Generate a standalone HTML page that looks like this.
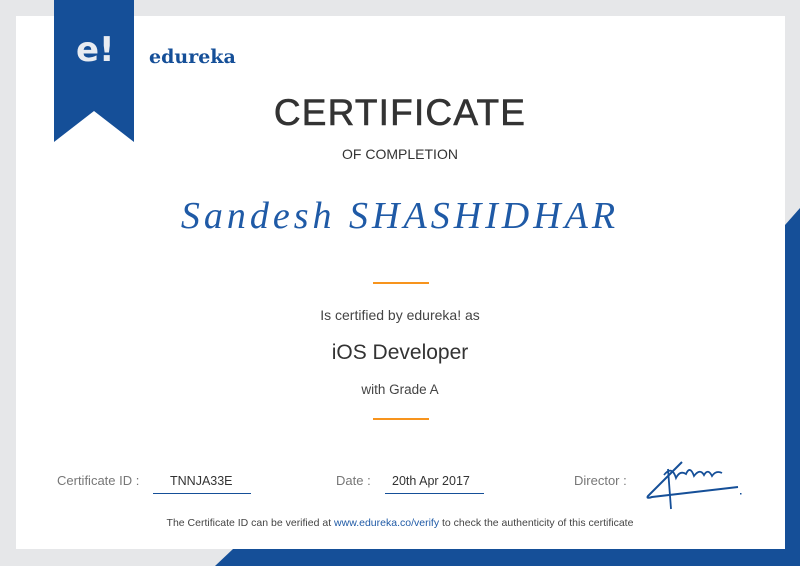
<!DOCTYPE html>
<html><head><meta charset="utf-8"><style>
*{margin:0;padding:0}
body{width:800px;height:566px;background:#e6e7e9;position:relative;overflow:hidden;font-family:"Liberation Sans",sans-serif}
.card{position:absolute;left:16px;top:16px;width:769px;height:533px;background:#fff}
.t{position:absolute;left:0;width:800px;text-align:center;white-space:nowrap}
.l{position:absolute;white-space:nowrap;font-size:13px;color:#777}
</style></head><body>
<div class="card"></div>
<svg style="position:absolute;left:0;top:0" width="800" height="566">
<polygon points="54,0 134,0 134,142 94,111 54,142" fill="#154f98"/>
<polygon points="785,225 800,208 800,566 785,566" fill="#154f98"/>
<polygon points="215,566 233,549 800,549 800,566" fill="#154f98"/>
<rect x="373" y="282" width="56" height="2" fill="#f7941d"/>
<rect x="373" y="418" width="56" height="2" fill="#f7941d"/>
<rect x="153" y="493" width="98" height="1" fill="#154f98"/>
<rect x="385" y="493" width="99" height="1" fill="#154f98"/>
<path d="M682 462 L648 496 Q646 499 652 497 L738 487" stroke="#154f98" stroke-width="2" fill="none"/>
<path d="M668 469 L671 509 M664 475 Q672 465 676 478 Q680 470 686 474 Q690 465 694 476 Q700 468 704 475 Q708 468 712 476 Q716 470 722 473" stroke="#154f98" stroke-width="1.8" fill="none"/>
<rect x="740" y="493" width="1.5" height="1.5" fill="#154f98"/>
</svg>
<div style="position:absolute;left:76px;top:30px;color:#e8ecf2;font-size:34px;font-weight:bold;font-family:'DejaVu Sans',sans-serif">e!</div>
<div style="position:absolute;left:149px;top:46px;color:#154f98;font-size:19px;font-weight:bold;font-family:'DejaVu Serif',serif">edureka</div>
<div class="t" style="top:92px;font-size:37px;color:#333;-webkit-text-stroke:0.6px #333;letter-spacing:1.2px">CERTIFICATE</div>
<div class="t" style="top:146px;font-size:14px;color:#333">OF COMPLETION</div>
<div class="t" style="top:194px;font-size:38px;color:#1f5aa6;font-family:'Liberation Serif',serif;font-style:italic;letter-spacing:4px">Sandesh SHASHIDHAR</div>
<div class="t" style="top:307px;font-size:14px;color:#444">Is certified by edureka! as</div>
<div class="t" style="top:341px;font-size:21px;color:#333">iOS Developer</div>
<div class="t" style="top:382px;font-size:13.5px;color:#444">with Grade A</div>
<div class="l" style="left:57px;top:473px">Certificate ID :</div>
<div class="l" style="left:170px;top:474px;color:#333;font-size:12.5px">TNNJA33E</div>
<div class="l" style="left:336px;top:473px">Date :</div>
<div class="l" style="left:392px;top:474px;color:#333;font-size:12.5px">20th Apr 2017</div>
<div class="l" style="left:574px;top:473px">Director :</div>
<div class="t" style="top:517px;font-size:10.5px;color:#444">The Certificate ID can be verified at <span style="color:#1f5aa6">www.edureka.co/verify</span> to check the authenticity of this certificate</div>
</body></html>
